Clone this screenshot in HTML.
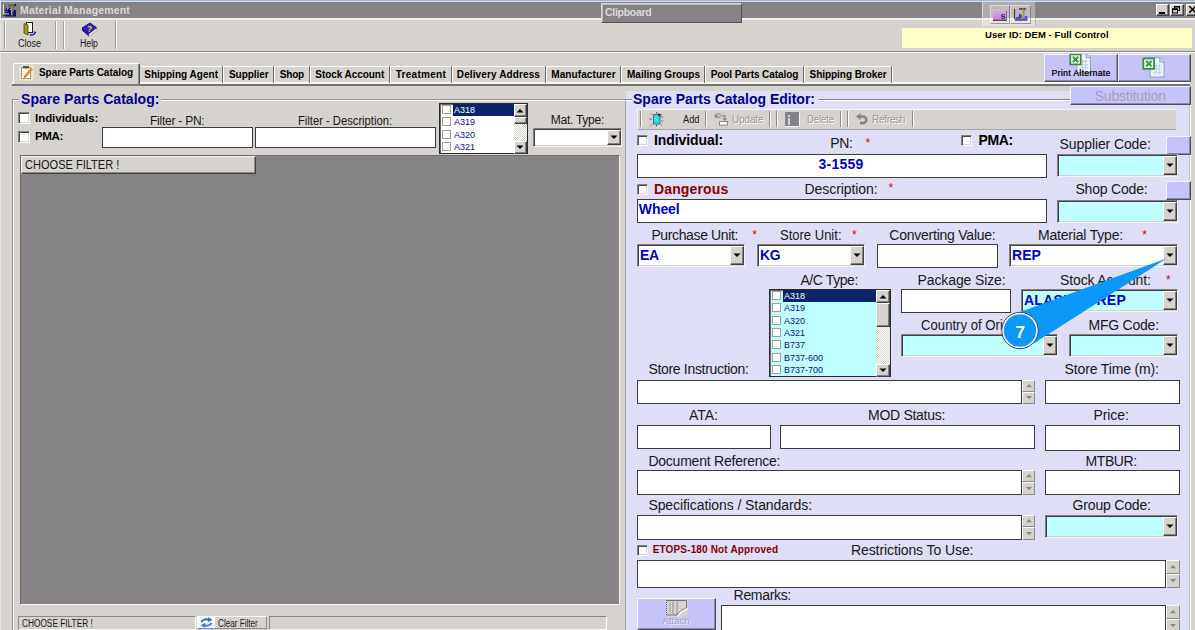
<!DOCTYPE html>
<html><head><meta charset="utf-8"><title>Material Management</title>
<style>
html,body{margin:0;padding:0;}
body{width:1195px;height:630px;overflow:hidden;position:relative;background:#d6d3ce;font-family:"Liberation Sans",sans-serif;}
.a{position:absolute;}
.t{white-space:pre;}
</style></head><body>
<div class="a " style="left:0px;top:0px;width:1195px;height:1px;background:#a6b6d6;"></div>
<div class="a " style="left:0px;top:1px;width:1195px;height:1px;background:#d3ddee;"></div>
<div class="a " style="left:0px;top:2px;width:1195px;height:16px;background:#858385;"></div>
<div class="a " style="left:0px;top:0px;width:1px;height:630px;background:#e4e6ee;"></div>
<div class="a " style="left:0px;top:18px;width:1195px;height:2px;background:#f1efec;"></div>
<svg class="a" style="left:3px;top:3px" width="14" height="14" viewBox="0 0 14 14">
<path d="M2.5 6.5l1.5 -1.5l1.5 1l1.5 -1.8l1.5 1.3v2.5h2l1 -1.6l1.5 1.6v5.5h-11z" fill="#000087"/>
<rect x="0" y="1.5" width="1.3" height="10" fill="#e8e8e8"/><rect x="1.3" y="1.8" width="1.2" height="9.7" fill="#4a4a4a"/>
<rect x="0" y="10.5" width="6" height="1.2" fill="#e8e8e8"/><rect x="0" y="11.5" width="6.5" height="1.1" fill="#2a2a20"/>
<rect x="5" y="1.6" width="7.5" height="1.8" fill="#5a5a5a"/><rect x="11.5" y="1.2" width="1.6" height="1.6" fill="#000"/>
<rect x="8" y="3" width="1.6" height="9.5" fill="#b4a84e"/><rect x="9.6" y="3" width="0.9" height="9.5" fill="#5a5424"/>
<rect x="4" y="5.6" width="1" height="1" fill="#fff"/><rect x="7" y="6" width="0.9" height="1" fill="#fff"/><rect x="3.4" y="8" width="1" height="0.8" fill="#e0e0ff"/></svg>
<div class="a " style="left:601px;top:3px;width:141px;height:20px;background:#858385;box-sizing:border-box;border:1px solid;border-color:#dcd9d3 #55535a #55535a #dcd9d3;box-shadow:inset 1px 1px 0 #bdbab6;"></div>
<div class="a " style="left:982px;top:2px;width:54px;height:24px;background:rgba(255,245,240,0.36);border-left:1px solid rgba(255,255,255,0.55);border-right:1px solid rgba(90,90,90,0.35);box-sizing:border-box;"></div>
<div class="a " style="left:990px;top:5px;width:20px;height:19px;background:rgba(255,250,248,0.22);box-sizing:border-box;border:1px solid;border-color:rgba(255,255,255,0.4) rgba(60,55,55,0.45) rgba(60,55,55,0.45) rgba(255,255,255,0.4);"></div>
<div class="a " style="left:1010px;top:5px;width:21px;height:19px;background:rgba(255,250,248,0.22);box-sizing:border-box;border:1px solid;border-color:rgba(255,255,255,0.4) rgba(60,55,55,0.45) rgba(60,55,55,0.45) rgba(255,255,255,0.4);"></div>
<svg class="a" style="left:992px;top:7px" width="16" height="15" viewBox="0 0 16 15">
<defs><linearGradient id="fg" x1="0" y1="0" x2="0" y2="1"><stop offset="0" stop-color="#cbb0d6"/><stop offset="1" stop-color="#d478e2"/></linearGradient></defs>
<path d="M2 1.5h6v2h-6z" fill="#d9cfd9"/><path d="M2 1.2h6.5" stroke="#7fae7a" stroke-width="0.8"/>
<path d="M1 4l2 -1.2h4l1.2 1.2h6.3v9.5h-13.5z" fill="url(#fg)"/>
<path d="M1 13.3h13.5" stroke="#4a3a4e" stroke-width="1.2"/><path d="M14.5 4v9.5" stroke="#6a5070" stroke-width="0.8"/>
<text x="8.6" y="11.6" font-size="9" font-weight="bold" font-family="Liberation Sans" fill="#2a2a90">s</text></svg>
<svg class="a" style="left:1013px;top:7px" width="16" height="15" viewBox="0 0 16 15">
<rect x="1" y="2" width="1.3" height="10" fill="#3a3840"/><rect x="2.3" y="2" width="1.5" height="10" fill="#b8b4b8"/>
<rect x="6" y="1.3" width="7" height="1.4" fill="#3a3840"/>
<rect x="3" y="10.3" width="5" height="1.4" fill="#3a3840"/>
<path d="M5 11l1.5 -5l1.5 2l1 -1v4z" fill="#4a48b8"/>
<rect x="9" y="2.5" width="2" height="9.5" fill="#c8b840"/><rect x="10.6" y="2.5" width="0.7" height="9.5" fill="#6a6430"/>
<rect x="2" y="11.6" width="12.5" height="2.2" fill="#4a50c8"/><rect x="11.5" y="9" width="3" height="3" fill="#5a58c0"/></svg>
<div class="a " style="left:1156px;top:4px;width:13px;height:12px;background:#d6d3ce;box-sizing:border-box;border:1px solid;border-color:#fff #404040 #404040 #fff;box-shadow:inset -1px -1px 0 #808080;"></div>
<div class="a " style="left:1170px;top:4px;width:14px;height:12px;background:#d6d3ce;box-sizing:border-box;border:1px solid;border-color:#fff #404040 #404040 #fff;box-shadow:inset -1px -1px 0 #808080;"></div>
<div class="a " style="left:1186px;top:4px;width:13px;height:12px;background:#d6d3ce;box-sizing:border-box;border:1px solid;border-color:#fff #404040 #404040 #fff;box-shadow:inset -1px -1px 0 #808080;"></div>
<div class="a" style="left:1159px;top:12px;width:6px;height:2px;background:#000"></div>
<svg class="a" style="left:1172px;top:6px" width="9" height="8" viewBox="0 0 9 8"><rect x="2.5" y="0.5" width="5" height="4" fill="none" stroke="#000"/><rect x="2" y="0" width="6" height="1.6" fill="#000"/><rect x="0.5" y="3" width="5" height="4" fill="#d6d3ce" stroke="#000"/><rect x="0" y="2.5" width="6" height="1.6" fill="#000"/></svg>
<svg class="a" style="left:1189px;top:6px" width="7" height="7" viewBox="0 0 7 7"><path d="M0 0l7 7M7 0l-7 7" stroke="#000" stroke-width="1.5"/></svg>
<div class="a " style="left:4px;top:21px;width:2px;height:28px;background:#a19e98;border-right:1px solid #fff;box-sizing:border-box;"></div>
<div class="a " style="left:55px;top:21px;width:2px;height:28px;background:#a19e98;border-right:1px solid #fff;box-sizing:border-box;"></div>
<div class="a " style="left:63px;top:21px;width:2px;height:28px;background:#a19e98;border-right:1px solid #fff;box-sizing:border-box;"></div>
<div class="a " style="left:115px;top:21px;width:2px;height:28px;background:#a19e98;border-right:1px solid #fff;box-sizing:border-box;"></div>
<svg class="a" style="left:23px;top:21px" width="15" height="16" viewBox="0 0 15 16">
<rect x="3.5" y="1.5" width="6" height="10" fill="#fff" stroke="#202020"/>
<path d="M1 2.5l4 1.5v10l-4 -2z" fill="#a8a000" stroke="#404000" stroke-width="0.8"/>
<path d="M7 13.5c2 1 4 0 5 -1.5" fill="none" stroke="#2030c0" stroke-width="1.4"/><path d="M10.5 10l3 1.2-2 2.3z" fill="#2030c0"/></svg>
<svg class="a" style="left:81px;top:22px" width="17" height="15" viewBox="0 0 17 15">
<path d="M1 6l8 -5l7 5l-8 6z" fill="#3020c0" stroke="#100860" stroke-width="0.8"/>
<path d="M1 6v2.5l7 6v-2.5z" fill="#2010a0"/><path d="M8 12l8 -6v2.5l-8 6z" fill="#f0f0f0" stroke="#808080" stroke-width="0.5"/>
<text x="6.2" y="9.5" font-size="8" font-weight="bold" font-family="Liberation Sans" fill="#ffe000" transform="rotate(8 8 7)">?</text></svg>
<div class="a " style="left:902px;top:28px;width:290px;height:20px;background:#ffffc6;"></div>
<div class="a " style="left:0px;top:51px;width:1195px;height:1px;background:#8e8b86;"></div>
<div class="a " style="left:0px;top:52px;width:1195px;height:1px;background:#fbfaf8;"></div>
<div class="a " style="left:12px;top:82px;width:1178px;height:2px;background:#fbfaf8;"></div>
<div class="a " style="left:12px;top:84px;width:1178px;height:2px;background:#747270;"></div>
<div class="a " style="left:13px;top:63px;width:127px;height:22px;background:#d6d3ce;box-sizing:border-box;border:1px solid;border-color:#fff #55534f #d6d3ce #fff;border-radius:2px 2px 0 0;box-shadow:inset -1px 0 0 #8e8b86;"></div>
<div class="a " style="left:13px;top:84px;width:126px;height:2px;background:#7c7a78;"></div>
<svg class="a" style="left:19px;top:65px" width="16" height="16" viewBox="0 0 16 16">
<rect x="0.5" y="0.5" width="14" height="15" rx="2" fill="#fbe7b8" />
<rect x="2.5" y="2.5" width="9" height="11" fill="#fff" stroke="#9a9a9a"/>
<rect x="4" y="1" width="6" height="2.5" fill="#555"/>
<path d="M5.5 10.5l6.5 -7.5l1.6 1.4l-6.5 7.5l-2.2 0.8z" fill="#f0a020" stroke="#a06000" stroke-width="0.5"/></svg>
<div class="a " style="left:141px;top:66px;width:751px;height:1px;background:#fbfaf8;"></div>
<div class="a " style="left:222px;top:66px;width:1px;height:17px;background:#6e6c68;"></div>
<div class="a " style="left:223px;top:66px;width:1px;height:17px;background:#fff;"></div>
<div class="a " style="left:273px;top:66px;width:1px;height:17px;background:#6e6c68;"></div>
<div class="a " style="left:274px;top:66px;width:1px;height:17px;background:#fff;"></div>
<div class="a " style="left:309px;top:66px;width:1px;height:17px;background:#6e6c68;"></div>
<div class="a " style="left:310px;top:66px;width:1px;height:17px;background:#fff;"></div>
<div class="a " style="left:389px;top:66px;width:1px;height:17px;background:#6e6c68;"></div>
<div class="a " style="left:390px;top:66px;width:1px;height:17px;background:#fff;"></div>
<div class="a " style="left:451px;top:66px;width:1px;height:17px;background:#6e6c68;"></div>
<div class="a " style="left:452px;top:66px;width:1px;height:17px;background:#fff;"></div>
<div class="a " style="left:545px;top:66px;width:1px;height:17px;background:#6e6c68;"></div>
<div class="a " style="left:546px;top:66px;width:1px;height:17px;background:#fff;"></div>
<div class="a " style="left:620px;top:66px;width:1px;height:17px;background:#6e6c68;"></div>
<div class="a " style="left:621px;top:66px;width:1px;height:17px;background:#fff;"></div>
<div class="a " style="left:704px;top:66px;width:1px;height:17px;background:#6e6c68;"></div>
<div class="a " style="left:705px;top:66px;width:1px;height:17px;background:#fff;"></div>
<div class="a " style="left:803px;top:66px;width:1px;height:17px;background:#6e6c68;"></div>
<div class="a " style="left:804px;top:66px;width:1px;height:17px;background:#fff;"></div>
<div class="a " style="left:891px;top:66px;width:1px;height:17px;background:#6e6c68;"></div>
<div class="a " style="left:892px;top:66px;width:1px;height:17px;background:#fff;"></div>
<div class="a " style="left:1044px;top:54px;width:74px;height:28px;background:#c6c3fb;box-sizing:border-box;border:1px solid;border-color:#f6f6ff #4e4e58 #4e4e58 #f6f6ff;box-shadow:inset -1px -1px 0 #8c8aa8;"></div>
<div class="a " style="left:1118px;top:54px;width:73px;height:28px;background:#c6c3fb;box-sizing:border-box;border:1px solid;border-color:#f6f6ff #4e4e58 #4e4e58 #f6f6ff;box-shadow:inset -1px -1px 0 #8c8aa8;"></div>
<div class="a" style="left:1045px;top:54px;width:72px;height:27px;overflow:hidden"><svg class="a" style="left:24px;top:-3.5px" width="23.1" height="23.1" viewBox="0 0 22 22">
<path d="M7.5 2.5h9l4 4v14h-13z" fill="#eef4fb" stroke="#8aa4c8"/><path d="M16.5 2.5v4h4" fill="#d5e3f5" stroke="#8aa4c8"/>
<path d="M10 10h8M10 13h8M10 16h8M13 8v10M16 8v10" stroke="#b5c8e4" stroke-width="0.8"/>
<rect x="1.2" y="3.2" width="10" height="9.6" fill="#eaf5ea" stroke="#3d8a3a" stroke-width="1.6"/>
<path d="M3.8 5.5l5 5M8.8 5.5l-5 5" stroke="#2e9a3e" stroke-width="1.8"/></svg></div>
<svg class="a" style="left:1141.5px;top:55px" width="23.76" height="23.76" viewBox="0 0 22 22">
<path d="M7.5 2.5h9l4 4v14h-13z" fill="#eef4fb" stroke="#8aa4c8"/><path d="M16.5 2.5v4h4" fill="#d5e3f5" stroke="#8aa4c8"/>
<path d="M10 10h8M10 13h8M10 16h8M13 8v10M16 8v10" stroke="#b5c8e4" stroke-width="0.8"/>
<rect x="1.2" y="3.2" width="10" height="9.6" fill="#eaf5ea" stroke="#3d8a3a" stroke-width="1.6"/>
<path d="M3.8 5.5l5 5M8.8 5.5l-5 5" stroke="#2e9a3e" stroke-width="1.8"/></svg>
<div class="a " style="left:12px;top:99px;width:614px;height:541px;box-sizing:border-box;border:1px solid #96938e;border-right-color:#a9a6a2;box-shadow:inset 1px 1px 0 #fff;"></div>
<div class="a " style="left:19px;top:92px;width:142px;height:16px;background:#d6d3ce;"></div>
<div class="a " style="left:18px;top:112px;width:12px;height:12px;background:#fff;box-sizing:border-box;border:1px solid;border-color:#858380 #fbfbfb #fbfbfb #858380;box-shadow:inset 1px 1px 0 #4a4a4a, inset -1px -1px 0 #d9d6d2;"></div>
<div class="a " style="left:18px;top:131px;width:12px;height:12px;background:#fff;box-sizing:border-box;border:1px solid;border-color:#858380 #fbfbfb #fbfbfb #858380;box-shadow:inset 1px 1px 0 #4a4a4a, inset -1px -1px 0 #d9d6d2;"></div>
<div class="a " style="left:102px;top:127px;width:151px;height:21px;background:#fff;border:1px solid #3a3a3a;box-sizing:border-box;"></div>
<div class="a " style="left:255px;top:127px;width:181px;height:21px;background:#fff;border:1px solid #3a3a3a;box-sizing:border-box;"></div>
<div class="a " style="left:533px;top:128px;width:89px;height:19px;background:#fff;box-sizing:border-box;border:1px solid;border-color:#808080 #f4f4f4 #f4f4f4 #808080;box-shadow:inset 1px 1px 0 #404040, inset -1px -1px 0 #d4d0c8;"></div>
<div class="a " style="left:607px;top:130px;width:14px;height:15px;background:#d6d3ce;box-sizing:border-box;border:1px solid;border-color:#fff #404040 #404040 #fff;box-shadow:inset -1px -1px 0 #808080;"></div>
<svg class="a" style="left:610px;top:135px" width="8" height="5" viewBox="0 0 8 5"><path d="M0.5 0.5h7l-3.5 3.5z" fill="#000"/></svg>
<div class="a " style="left:439px;top:103px;width:89px;height:51px;background:#fff;box-sizing:border-box;border:1px solid #2a2a2a;box-shadow:inset 1px 1px 0 #6a6a6a;"></div>
<div class="a " style="left:453px;top:104px;width:61px;height:12px;background:#0a246a;"></div>
<div class="a " style="left:442px;top:105px;width:9px;height:9px;background:#fff;box-sizing:border-box;border:1px solid #a29e9a;"></div>
<div class="a " style="left:442px;top:117px;width:9px;height:9px;background:#fff;box-sizing:border-box;border:1px solid #a29e9a;"></div>
<div class="a " style="left:442px;top:130px;width:9px;height:9px;background:#fff;box-sizing:border-box;border:1px solid #a29e9a;"></div>
<div class="a " style="left:442px;top:142px;width:9px;height:9px;background:#fff;box-sizing:border-box;border:1px solid #a29e9a;"></div>
<div class="a " style="left:514px;top:104px;width:13px;height:49.5px;background:#eceae6;background-image:repeating-conic-gradient(#fff 0 25%,#d6d3ce 0 50%);background-size:2px 2px;"></div>
<div class="a " style="left:514px;top:104px;width:13px;height:12.5px;background:#d6d3ce;box-sizing:border-box;border:1px solid;border-color:#fff #404040 #404040 #fff;box-shadow:inset -1px -1px 0 #808080;"></div>
<svg class="a" style="left:516px;top:108px" width="8" height="5" viewBox="0 0 8 5"><path d="M0.5 4.5h7l-3.5 -3.5z" fill="#000"/></svg>
<div class="a " style="left:514px;top:141.0px;width:13px;height:12.5px;background:#d6d3ce;box-sizing:border-box;border:1px solid;border-color:#fff #404040 #404040 #fff;box-shadow:inset -1px -1px 0 #808080;"></div>
<svg class="a" style="left:516px;top:145px" width="8" height="5" viewBox="0 0 8 5"><path d="M0.5 0.5h7l-3.5 3.5z" fill="#000"/></svg>
<div class="a " style="left:514px;top:117px;width:13px;height:7px;background:#d6d3ce;box-sizing:border-box;border:1px solid;border-color:#fff #404040 #404040 #fff;box-shadow:inset -1px -1px 0 #808080;"></div>
<div class="a " style="left:20px;top:155px;width:600px;height:450px;background:#858385;box-sizing:border-box;border:1px solid;border-color:#6e6c6a #f4f3ef #f4f3ef #6e6c6a;"></div>
<div class="a " style="left:21px;top:156px;width:235px;height:18px;background:#d6d3ce;box-sizing:border-box;border:1px solid;border-color:#f4f3ef #404040 #404040 #f4f3ef;box-shadow:inset -1px -1px 0 #8e8b86;"></div>
<div class="a " style="left:18px;top:616px;width:178px;height:14px;background:#d6d3ce;box-sizing:border-box;border:1px solid;border-color:#8e8b86 #fff #fff #8e8b86;"></div>
<div class="a " style="left:197px;top:616px;width:70px;height:13px;background:#d6d3ce;box-sizing:border-box;border:1px solid;border-color:#fff #8e8b86 #8e8b86 #fff;"></div>
<svg class="a" style="left:198px;top:617px" width="17" height="11" viewBox="0 0 17 11">
<rect x="0" y="0" width="17" height="11" fill="#f6f7fb"/>
<path d="M3.5 5.2c0.6 -2.6 4.5 -3.6 8 -2.2" fill="none" stroke="#3068d0" stroke-width="2"/><path d="M10 0.2l4.6 2.6-4.8 2.4z" fill="#3068d0"/>
<path d="M13.5 5.8c-0.6 2.6 -4.5 3.6 -8 2.2" fill="none" stroke="#3b7be0" stroke-width="2"/><path d="M7 10.8l-4.6 -2.6l4.8 -2.4z" fill="#3b7be0"/></svg>
<div class="a " style="left:269px;top:616px;width:338px;height:14px;background:#d6d3ce;box-sizing:border-box;border:1px solid;border-color:#8e8b86 #fff #fff #8e8b86;"></div>
<div class="a " style="left:626px;top:91px;width:563px;height:549px;background:#dedef6;"></div>
<div class="a " style="left:1189px;top:86px;width:1px;height:554px;background:#bdbdca;"></div>
<div class="a " style="left:1190px;top:86px;width:1px;height:554px;background:#fff;"></div>
<div class="a " style="left:626px;top:99px;width:444px;height:1px;background:#8e8b86;"></div>
<div class="a " style="left:626px;top:100px;width:444px;height:1px;background:#fff;"></div>
<div class="a " style="left:632px;top:91px;width:186px;height:17px;background:#dedef6;"></div>
<div class="a " style="left:1070px;top:86px;width:121px;height:19px;background:#c6c3fb;box-sizing:border-box;border:1px solid;border-color:#f6f6ff #4e4e58 #4e4e58 #f6f6ff;box-shadow:inset -1px -1px 0 #8c8aa8;"></div>
<div class="a " style="left:637px;top:109px;width:539px;height:21px;background:#d6d3ce;box-sizing:border-box;border-top:1px solid #f6f5f2;border-left:1px solid #f6f5f2;border-bottom:1px solid #a9a6a3;"></div>
<div class="a " style="left:640px;top:111px;width:1px;height:16px;background:#8e8b86;"></div>
<div class="a " style="left:641px;top:111px;width:1px;height:16px;background:#fff;"></div>
<div class="a " style="left:705px;top:111px;width:1px;height:16px;background:#8e8b86;"></div>
<div class="a " style="left:706px;top:111px;width:1px;height:16px;background:#fff;"></div>
<div class="a " style="left:769px;top:111px;width:1px;height:16px;background:#8e8b86;"></div>
<div class="a " style="left:770px;top:111px;width:1px;height:16px;background:#fff;"></div>
<div class="a " style="left:776px;top:111px;width:1px;height:16px;background:#8e8b86;"></div>
<div class="a " style="left:777px;top:111px;width:1px;height:16px;background:#fff;"></div>
<div class="a " style="left:840px;top:111px;width:1px;height:16px;background:#8e8b86;"></div>
<div class="a " style="left:841px;top:111px;width:1px;height:16px;background:#fff;"></div>
<div class="a " style="left:847px;top:111px;width:1px;height:16px;background:#8e8b86;"></div>
<div class="a " style="left:848px;top:111px;width:1px;height:16px;background:#fff;"></div>
<div class="a " style="left:912px;top:111px;width:1px;height:16px;background:#8e8b86;"></div>
<div class="a " style="left:913px;top:111px;width:1px;height:16px;background:#fff;"></div>
<svg class="a" style="left:649px;top:112px" width="15" height="15" viewBox="0 0 15 15">
<path d="M4.5 2.5h4l2.5 2.5v7h-6.5z" fill="#18dfee" stroke="#404848" stroke-width="0.7"/>
<path d="M8 1.5l3.5 3.5v-3z" fill="#101010"/>
<path d="M6 6l2.5 2.5M8.5 6.5l-2 2" stroke="#8af4fa" stroke-width="0.8"/>
<path d="M7.5 0.3v1.4M2 1.6l1.4 1.4M12.6 2.2l-1 1M0.6 7h2.2M12.4 5h2M12.4 9h2M2 13.4l1.4 -1.4M12.8 13.2l-1.2 -1.2M7.5 13v1.6" stroke="#202020" stroke-width="1" stroke-dasharray="1 0.7"/></svg>
<svg class="a" style="left:714px;top:113px" width="15" height="13" viewBox="0 0 15 13">
<rect x="0.6" y="0.6" width="2.4" height="4.2" fill="#8e8b86"/><rect x="3.6" y="0.6" width="2.4" height="4.2" fill="none" stroke="#8e8b86" stroke-width="0.9"/>
<path d="M7.5 2.6h3.2v3.6" fill="none" stroke="#8e8b86" stroke-width="1.3"/><path d="M8.4 5.4h4.8l-2.4 2.6z" fill="#8e8b86"/>
<path d="M1.2 1.2h2.2" stroke="#fff" stroke-width="0.6"/>
<rect x="5.5" y="8.5" width="8" height="3.6" fill="#fbfbfb" stroke="#8e8b86" stroke-width="1"/></svg>
<div class="a " style="left:785px;top:112px;width:14px;height:14px;background:#858188;box-shadow:1px 1px 0 #f4f4f4;"></div>
<div class="a" style="left:788px;top:115px;width:2px;height:2px;background:#d6d3ce"></div><div class="a" style="left:788px;top:118px;width:2px;height:7px;background:#d6d3ce"></div>
<svg class="a" style="left:856px;top:113px" width="12" height="12" viewBox="0 0 12 12">
<path d="M3 3.5h4a3.2 3.2 0 0 1 0 6.6h-3" fill="none" stroke="#85828a" stroke-width="2.6"/><path d="M0 3.5l4.6 -3.5v7z" fill="#85828a"/></svg>
<div class="a " style="left:637px;top:135px;width:11px;height:11px;background:#fff;box-sizing:border-box;border:1px solid;border-color:#858380 #fbfbfb #fbfbfb #858380;box-shadow:inset 1px 1px 0 #4a4a4a, inset -1px -1px 0 #d9d6d2;"></div>
<div class="a " style="left:961px;top:135px;width:11px;height:11px;background:#fff;box-sizing:border-box;border:1px solid;border-color:#858380 #fbfbfb #fbfbfb #858380;box-shadow:inset 1px 1px 0 #4a4a4a, inset -1px -1px 0 #d9d6d2;"></div>
<div class="a " style="left:1166px;top:136px;width:25px;height:19px;background:#c6c3fb;box-sizing:border-box;border:1px solid;border-color:#f6f6ff #4e4e58 #4e4e58 #f6f6ff;box-shadow:inset -1px -1px 0 #8c8aa8;"></div>
<div class="a " style="left:637px;top:154px;width:410px;height:24px;background:#fff;border:1px solid #3a3a3a;box-sizing:border-box;"></div>
<div class="a " style="left:1057px;top:154px;width:121px;height:23px;background:#c0ffff;box-sizing:border-box;border:1px solid;border-color:#808080 #f4f4f4 #f4f4f4 #808080;box-shadow:inset 1px 1px 0 #404040, inset -1px -1px 0 #d4d0c8;"></div>
<div class="a " style="left:1163px;top:156px;width:14px;height:19px;background:#d6d3ce;box-sizing:border-box;border:1px solid;border-color:#fff #404040 #404040 #fff;box-shadow:inset -1px -1px 0 #808080;"></div>
<svg class="a" style="left:1166px;top:163px" width="8" height="5" viewBox="0 0 8 5"><path d="M0.5 0.5h7l-3.5 3.5z" fill="#000"/></svg>
<div class="a " style="left:637px;top:184px;width:11px;height:11px;background:#fff;box-sizing:border-box;border:1px solid;border-color:#858380 #fbfbfb #fbfbfb #858380;box-shadow:inset 1px 1px 0 #4a4a4a, inset -1px -1px 0 #d9d6d2;"></div>
<div class="a " style="left:1166px;top:181px;width:25px;height:19px;background:#c6c3fb;box-sizing:border-box;border:1px solid;border-color:#f6f6ff #4e4e58 #4e4e58 #f6f6ff;box-shadow:inset -1px -1px 0 #8c8aa8;"></div>
<div class="a " style="left:637px;top:199px;width:410px;height:24px;background:#fff;border:1px solid #3a3a3a;box-sizing:border-box;"></div>
<div class="a " style="left:1057px;top:200px;width:121px;height:23px;background:#c0ffff;box-sizing:border-box;border:1px solid;border-color:#808080 #f4f4f4 #f4f4f4 #808080;box-shadow:inset 1px 1px 0 #404040, inset -1px -1px 0 #d4d0c8;"></div>
<div class="a " style="left:1163px;top:202px;width:14px;height:19px;background:#d6d3ce;box-sizing:border-box;border:1px solid;border-color:#fff #404040 #404040 #fff;box-shadow:inset -1px -1px 0 #808080;"></div>
<svg class="a" style="left:1166px;top:209px" width="8" height="5" viewBox="0 0 8 5"><path d="M0.5 0.5h7l-3.5 3.5z" fill="#000"/></svg>
<div class="a " style="left:637px;top:244px;width:108px;height:23px;background:#fff;box-sizing:border-box;border:1px solid;border-color:#808080 #f4f4f4 #f4f4f4 #808080;box-shadow:inset 1px 1px 0 #404040, inset -1px -1px 0 #d4d0c8;"></div>
<div class="a " style="left:730px;top:246px;width:14px;height:19px;background:#d6d3ce;box-sizing:border-box;border:1px solid;border-color:#fff #404040 #404040 #fff;box-shadow:inset -1px -1px 0 #808080;"></div>
<svg class="a" style="left:733px;top:253px" width="8" height="5" viewBox="0 0 8 5"><path d="M0.5 0.5h7l-3.5 3.5z" fill="#000"/></svg>
<div class="a " style="left:757px;top:244px;width:108px;height:23px;background:#fff;box-sizing:border-box;border:1px solid;border-color:#808080 #f4f4f4 #f4f4f4 #808080;box-shadow:inset 1px 1px 0 #404040, inset -1px -1px 0 #d4d0c8;"></div>
<div class="a " style="left:850px;top:246px;width:14px;height:19px;background:#d6d3ce;box-sizing:border-box;border:1px solid;border-color:#fff #404040 #404040 #fff;box-shadow:inset -1px -1px 0 #808080;"></div>
<svg class="a" style="left:853px;top:253px" width="8" height="5" viewBox="0 0 8 5"><path d="M0.5 0.5h7l-3.5 3.5z" fill="#000"/></svg>
<div class="a " style="left:877px;top:244px;width:121px;height:24px;background:#fff;border:1px solid #3a3a3a;box-sizing:border-box;"></div>
<div class="a " style="left:1009px;top:244px;width:169px;height:23px;background:#fff;box-sizing:border-box;border:1px solid;border-color:#808080 #f4f4f4 #f4f4f4 #808080;box-shadow:inset 1px 1px 0 #404040, inset -1px -1px 0 #d4d0c8;"></div>
<div class="a " style="left:1163px;top:246px;width:14px;height:19px;background:#d6d3ce;box-sizing:border-box;border:1px solid;border-color:#fff #404040 #404040 #fff;box-shadow:inset -1px -1px 0 #808080;"></div>
<svg class="a" style="left:1166px;top:253px" width="8" height="5" viewBox="0 0 8 5"><path d="M0.5 0.5h7l-3.5 3.5z" fill="#000"/></svg>
<div class="a " style="left:769px;top:289px;width:122px;height:88px;background:#c0ffff;box-sizing:border-box;border:1px solid #2a2a2a;box-shadow:inset 1px 1px 0 #6a6a6a;"></div>
<div class="a " style="left:783px;top:290px;width:93px;height:12px;background:#0a246a;"></div>
<div class="a " style="left:772px;top:291px;width:9px;height:9px;background:#fff;box-sizing:border-box;border:1px solid #a29e9a;"></div>
<div class="a " style="left:772px;top:303px;width:9px;height:9px;background:#fff;box-sizing:border-box;border:1px solid #a29e9a;"></div>
<div class="a " style="left:772px;top:316px;width:9px;height:9px;background:#fff;box-sizing:border-box;border:1px solid #a29e9a;"></div>
<div class="a " style="left:772px;top:328px;width:9px;height:9px;background:#fff;box-sizing:border-box;border:1px solid #a29e9a;"></div>
<div class="a " style="left:772px;top:340px;width:9px;height:9px;background:#fff;box-sizing:border-box;border:1px solid #a29e9a;"></div>
<div class="a " style="left:772px;top:353px;width:9px;height:9px;background:#fff;box-sizing:border-box;border:1px solid #a29e9a;"></div>
<div class="a " style="left:772px;top:365px;width:9px;height:9px;background:#fff;box-sizing:border-box;border:1px solid #a29e9a;"></div>
<div class="a " style="left:876px;top:290px;width:14px;height:86.5px;background:#eceae6;background-image:repeating-conic-gradient(#fff 0 25%,#d6d3ce 0 50%);background-size:2px 2px;"></div>
<div class="a " style="left:876px;top:290px;width:14px;height:12.5px;background:#d6d3ce;box-sizing:border-box;border:1px solid;border-color:#fff #404040 #404040 #fff;box-shadow:inset -1px -1px 0 #808080;"></div>
<svg class="a" style="left:879px;top:294px" width="8" height="5" viewBox="0 0 8 5"><path d="M0.5 4.5h7l-3.5 -3.5z" fill="#000"/></svg>
<div class="a " style="left:876px;top:364.0px;width:14px;height:12.5px;background:#d6d3ce;box-sizing:border-box;border:1px solid;border-color:#fff #404040 #404040 #fff;box-shadow:inset -1px -1px 0 #808080;"></div>
<svg class="a" style="left:879px;top:368px" width="8" height="5" viewBox="0 0 8 5"><path d="M0.5 0.5h7l-3.5 3.5z" fill="#000"/></svg>
<div class="a " style="left:876px;top:303px;width:14px;height:24px;background:#d6d3ce;box-sizing:border-box;border:1px solid;border-color:#fff #404040 #404040 #fff;box-shadow:inset -1px -1px 0 #808080;"></div>
<div class="a " style="left:901px;top:289px;width:110px;height:24px;background:#fff;border:1px solid #3a3a3a;box-sizing:border-box;"></div>
<div class="a " style="left:1021px;top:289px;width:157px;height:23px;background:#c0ffff;box-sizing:border-box;border:1px solid;border-color:#808080 #f4f4f4 #f4f4f4 #808080;box-shadow:inset 1px 1px 0 #404040, inset -1px -1px 0 #d4d0c8;"></div>
<div class="a " style="left:1163px;top:291px;width:14px;height:19px;background:#d6d3ce;box-sizing:border-box;border:1px solid;border-color:#fff #404040 #404040 #fff;box-shadow:inset -1px -1px 0 #808080;"></div>
<svg class="a" style="left:1166px;top:298px" width="8" height="5" viewBox="0 0 8 5"><path d="M0.5 0.5h7l-3.5 3.5z" fill="#000"/></svg>
<div class="a " style="left:901px;top:334px;width:157px;height:23px;background:#c0ffff;box-sizing:border-box;border:1px solid;border-color:#808080 #f4f4f4 #f4f4f4 #808080;box-shadow:inset 1px 1px 0 #404040, inset -1px -1px 0 #d4d0c8;"></div>
<div class="a " style="left:1043px;top:336px;width:14px;height:19px;background:#d6d3ce;box-sizing:border-box;border:1px solid;border-color:#fff #404040 #404040 #fff;box-shadow:inset -1px -1px 0 #808080;"></div>
<svg class="a" style="left:1046px;top:343px" width="8" height="5" viewBox="0 0 8 5"><path d="M0.5 0.5h7l-3.5 3.5z" fill="#000"/></svg>
<div class="a " style="left:1069px;top:334px;width:109px;height:23px;background:#c0ffff;box-sizing:border-box;border:1px solid;border-color:#808080 #f4f4f4 #f4f4f4 #808080;box-shadow:inset 1px 1px 0 #404040, inset -1px -1px 0 #d4d0c8;"></div>
<div class="a " style="left:1163px;top:336px;width:14px;height:19px;background:#d6d3ce;box-sizing:border-box;border:1px solid;border-color:#fff #404040 #404040 #fff;box-shadow:inset -1px -1px 0 #808080;"></div>
<svg class="a" style="left:1166px;top:343px" width="8" height="5" viewBox="0 0 8 5"><path d="M0.5 0.5h7l-3.5 3.5z" fill="#000"/></svg>
<div class="a " style="left:637px;top:380px;width:385px;height:24px;background:#fff;border:1px solid #3a3a3a;box-sizing:border-box;"></div>
<div class="a " style="left:1021px;top:380px;width:1px;height:24px;background:#3a3a3a;"></div>
<div class="a " style="left:1022px;top:380px;width:13px;height:12px;background:#d6d3ce;box-sizing:border-box;border:1px solid;border-color:#fbfaf8 #8e8b86 #8e8b86 #fbfaf8;"></div>
<svg class="a" style="left:1025.5px;top:384.4px" width="6" height="3.2" viewBox="0 0 6 3.2"><path d="M0 3.2h6l-3 -3.2z" fill="#8a8884"/></svg>
<div class="a " style="left:1022px;top:392px;width:13px;height:12px;background:#d6d3ce;box-sizing:border-box;border:1px solid;border-color:#fbfaf8 #8e8b86 #8e8b86 #fbfaf8;"></div>
<svg class="a" style="left:1025.5px;top:396.4px" width="6" height="3.2" viewBox="0 0 6 3.2"><path d="M0 0h6l-3 3.2z" fill="#8a8884"/></svg>
<div class="a " style="left:1045px;top:380px;width:135px;height:24px;background:#fff;border:1px solid #3a3a3a;box-sizing:border-box;"></div>
<div class="a " style="left:637px;top:425px;width:134px;height:24px;background:#fff;border:1px solid #3a3a3a;box-sizing:border-box;"></div>
<div class="a " style="left:780px;top:425px;width:255px;height:24px;background:#fff;border:1px solid #3a3a3a;box-sizing:border-box;"></div>
<div class="a " style="left:1045px;top:425px;width:135px;height:26px;background:#fff;border:1px solid #3a3a3a;box-sizing:border-box;"></div>
<div class="a " style="left:637px;top:470px;width:385px;height:25px;background:#fff;border:1px solid #3a3a3a;box-sizing:border-box;"></div>
<div class="a " style="left:1021px;top:470px;width:1px;height:25px;background:#3a3a3a;"></div>
<div class="a " style="left:1022px;top:470px;width:13px;height:12px;background:#d6d3ce;box-sizing:border-box;border:1px solid;border-color:#fbfaf8 #8e8b86 #8e8b86 #fbfaf8;"></div>
<svg class="a" style="left:1025.5px;top:474.4px" width="6" height="3.2" viewBox="0 0 6 3.2"><path d="M0 3.2h6l-3 -3.2z" fill="#8a8884"/></svg>
<div class="a " style="left:1022px;top:482px;width:13px;height:13px;background:#d6d3ce;box-sizing:border-box;border:1px solid;border-color:#fbfaf8 #8e8b86 #8e8b86 #fbfaf8;"></div>
<svg class="a" style="left:1025.5px;top:486.9px" width="6" height="3.2" viewBox="0 0 6 3.2"><path d="M0 0h6l-3 3.2z" fill="#8a8884"/></svg>
<div class="a " style="left:1045px;top:470px;width:135px;height:25px;background:#fff;border:1px solid #3a3a3a;box-sizing:border-box;"></div>
<div class="a " style="left:637px;top:515px;width:385px;height:25px;background:#fff;border:1px solid #3a3a3a;box-sizing:border-box;"></div>
<div class="a " style="left:1021px;top:515px;width:1px;height:25px;background:#3a3a3a;"></div>
<div class="a " style="left:1022px;top:515px;width:13px;height:12px;background:#d6d3ce;box-sizing:border-box;border:1px solid;border-color:#fbfaf8 #8e8b86 #8e8b86 #fbfaf8;"></div>
<svg class="a" style="left:1025.5px;top:519.4px" width="6" height="3.2" viewBox="0 0 6 3.2"><path d="M0 3.2h6l-3 -3.2z" fill="#8a8884"/></svg>
<div class="a " style="left:1022px;top:527px;width:13px;height:13px;background:#d6d3ce;box-sizing:border-box;border:1px solid;border-color:#fbfaf8 #8e8b86 #8e8b86 #fbfaf8;"></div>
<svg class="a" style="left:1025.5px;top:531.9px" width="6" height="3.2" viewBox="0 0 6 3.2"><path d="M0 0h6l-3 3.2z" fill="#8a8884"/></svg>
<div class="a " style="left:1045px;top:515px;width:133px;height:23px;background:#c0ffff;box-sizing:border-box;border:1px solid;border-color:#808080 #f4f4f4 #f4f4f4 #808080;box-shadow:inset 1px 1px 0 #404040, inset -1px -1px 0 #d4d0c8;"></div>
<div class="a " style="left:1163px;top:517px;width:14px;height:19px;background:#d6d3ce;box-sizing:border-box;border:1px solid;border-color:#fff #404040 #404040 #fff;box-shadow:inset -1px -1px 0 #808080;"></div>
<svg class="a" style="left:1166px;top:524px" width="8" height="5" viewBox="0 0 8 5"><path d="M0.5 0.5h7l-3.5 3.5z" fill="#000"/></svg>
<div class="a " style="left:637px;top:545px;width:11px;height:11px;background:#fff;box-sizing:border-box;border:1px solid;border-color:#858380 #fbfbfb #fbfbfb #858380;box-shadow:inset 1px 1px 0 #4a4a4a, inset -1px -1px 0 #d9d6d2;"></div>
<div class="a " style="left:637px;top:560px;width:529px;height:28px;background:#fff;border:1px solid #3a3a3a;box-sizing:border-box;"></div>
<div class="a " style="left:1165px;top:560px;width:1px;height:28px;background:#3a3a3a;"></div>
<div class="a " style="left:1166px;top:560px;width:14px;height:14px;background:#d6d3ce;box-sizing:border-box;border:1px solid;border-color:#fbfaf8 #8e8b86 #8e8b86 #fbfaf8;"></div>
<svg class="a" style="left:1170.0px;top:565.4px" width="6" height="3.2" viewBox="0 0 6 3.2"><path d="M0 3.2h6l-3 -3.2z" fill="#8a8884"/></svg>
<div class="a " style="left:1166px;top:574px;width:14px;height:14px;background:#d6d3ce;box-sizing:border-box;border:1px solid;border-color:#fbfaf8 #8e8b86 #8e8b86 #fbfaf8;"></div>
<svg class="a" style="left:1170.0px;top:579.4px" width="6" height="3.2" viewBox="0 0 6 3.2"><path d="M0 0h6l-3 3.2z" fill="#8a8884"/></svg>
<div class="a " style="left:637px;top:598px;width:79px;height:32px;background:#c6c3fb;box-sizing:border-box;border:1px solid;border-color:#f6f6ff #4e4e58 #4e4e58 #f6f6ff;box-shadow:inset -1px -1px 0 #8c8aa8;"></div>
<svg class="a" style="left:666px;top:599px" width="22" height="19" viewBox="0 0 22 19">
<rect x="0" y="0.5" width="21.5" height="17.5" fill="#d6d3ce"/>
<path d="M0.5 1v15" stroke="#55534f" stroke-width="1" stroke-dasharray="1 1"/>
<path d="M0.5 1.5h20v6.5c-1 2.5 -2.5 2 -4 2.6c-2.5 1 -3 3.4 -5.5 5.4h-10" fill="none" stroke="#77746f" stroke-width="1"/>
<path d="M21 9.2c-1 2.5 -2.5 2 -4 2.6c-2.5 1 -3 3.4 -5.5 5.4" fill="none" stroke="#fbfbff" stroke-width="1.4"/>
<path d="M4 2.5v12" stroke="#a9a6a1" stroke-width="1.2"/>
<path d="M7 2.5v11c0 3 4.2 3 4.2 0v-11" fill="none" stroke="#9a9792" stroke-width="1.2"/></svg>
<div class="a " style="left:721px;top:605px;width:445px;height:35px;background:#fff;border:1px solid #3a3a3a;box-sizing:border-box;"></div>
<div class="a " style="left:1165px;top:605px;width:1px;height:28px;background:#3a3a3a;"></div>
<div class="a " style="left:1166px;top:605px;width:14px;height:14px;background:#d6d3ce;box-sizing:border-box;border:1px solid;border-color:#fbfaf8 #8e8b86 #8e8b86 #fbfaf8;"></div>
<svg class="a" style="left:1170.0px;top:610.4px" width="6" height="3.2" viewBox="0 0 6 3.2"><path d="M0 3.2h6l-3 -3.2z" fill="#8a8884"/></svg>
<div class="a " style="left:1166px;top:619px;width:14px;height:14px;background:#d6d3ce;box-sizing:border-box;border:1px solid;border-color:#fbfaf8 #8e8b86 #8e8b86 #fbfaf8;"></div>
<svg class="a" style="left:1170.0px;top:624.4px" width="6" height="3.2" viewBox="0 0 6 3.2"><path d="M0 0h6l-3 3.2z" fill="#8a8884"/></svg>
<span class="a t" id="L0" style="left:20px;top:5px;font-size:10.5px;line-height:10.5px;color:#dddbd8;font-weight:bold;letter-spacing:0.169px;">Material Management</span>
<span class="a t" id="L1" style="left:605px;top:7px;font-size:10.5px;line-height:10.5px;color:#dddbd8;font-weight:bold;letter-spacing:-0.289px;">Clipboard</span>
<span class="a t" id="L2" style="left:18px;top:39px;font-size:10px;line-height:10px;color:#181818;transform:scaleX(0.8992);transform-origin:0 0;">Close</span>
<span class="a t" id="L3" style="left:80px;top:39px;font-size:10px;line-height:10px;color:#181818;transform:scaleX(0.8747);transform-origin:0 0;">Help</span>
<span class="a t" id="L4" style="left:985px;top:30px;font-size:9.5px;line-height:9.5px;color:#000;font-weight:bold;letter-spacing:0.062px;">User ID: DEM - Full Control</span>
<span class="a t" id="L5" style="left:39px;top:68px;font-size:10px;line-height:10px;color:#000;font-weight:bold;letter-spacing:-0.055px;">Spare Parts Catalog</span>
<span class="a t" id="L6" style="left:144.2px;top:70px;font-size:10px;line-height:10px;color:#000;font-weight:bold;letter-spacing:0.027px;">Shipping Agent</span>
<span class="a t" id="L7" style="left:229px;top:70px;font-size:10px;line-height:10px;color:#000;font-weight:bold;letter-spacing:-0.064px;">Supplier</span>
<span class="a t" id="L8" style="left:279.8px;top:70px;font-size:10px;line-height:10px;color:#000;font-weight:bold;letter-spacing:-0.200px;">Shop</span>
<span class="a t" id="L9" style="left:315.3px;top:70px;font-size:10px;line-height:10px;color:#000;font-weight:bold;letter-spacing:-0.057px;">Stock Account</span>
<span class="a t" id="L10" style="left:395.8px;top:70px;font-size:10px;line-height:10px;color:#000;font-weight:bold;letter-spacing:0.267px;">Treatment</span>
<span class="a t" id="L11" style="left:456.8px;top:70px;font-size:10px;line-height:10px;color:#000;font-weight:bold;letter-spacing:0.116px;">Delivery Address</span>
<span class="a t" id="L12" style="left:551.3px;top:70px;font-size:10px;line-height:10px;color:#000;font-weight:bold;letter-spacing:0.087px;">Manufacturer</span>
<span class="a t" id="L13" style="left:627px;top:70px;font-size:10px;line-height:10px;color:#000;font-weight:bold;letter-spacing:0.016px;">Mailing Groups</span>
<span class="a t" id="L14" style="left:710.7px;top:70px;font-size:10px;line-height:10px;color:#000;font-weight:bold;letter-spacing:-0.078px;">Pool Parts Catalog</span>
<span class="a t" id="L15" style="left:809.5px;top:70px;font-size:10px;line-height:10px;color:#000;font-weight:bold;letter-spacing:-0.040px;">Shipping Broker</span>
<span class="a t" id="L16" style="left:1051.5px;top:69px;font-size:8.5px;line-height:8.5px;color:#181818;letter-spacing:0.381px;text-shadow:0.3px 0 0 #000;">Print Alternate</span>
<span class="a t" id="L17" style="left:21px;top:92px;font-size:14px;line-height:14px;color:#00008b;font-weight:bold;letter-spacing:0.039px;">Spare Parts Catalog:</span>
<span class="a t" id="L18" style="left:35px;top:113px;font-size:11.5px;line-height:11.5px;color:#000;font-weight:bold;letter-spacing:-0.042px;">Individuals:</span>
<span class="a t" id="L19" style="left:35px;top:131px;font-size:11.5px;line-height:11.5px;color:#000;font-weight:bold;letter-spacing:-0.348px;">PMA:</span>
<span class="a t" id="L20" style="left:150px;top:115px;font-size:12px;line-height:12px;color:#181818;letter-spacing:-0.245px;">Filter - PN:</span>
<span class="a t" id="L21" style="left:298px;top:115px;font-size:12px;line-height:12px;color:#181818;transform:scaleX(0.9336);transform-origin:0 0;">Filter - Description:</span>
<span class="a t" id="L22" style="left:550.8px;top:114px;font-size:12px;line-height:12px;color:#181818;letter-spacing:-0.261px;">Mat. Type:</span>
<span class="a t" id="L23" style="left:454px;top:106px;font-size:9px;line-height:9px;color:#fff;">A318</span>
<span class="a t" id="L24" style="left:454px;top:118px;font-size:9px;line-height:9px;color:#0c0c94;">A319</span>
<span class="a t" id="L25" style="left:454px;top:131px;font-size:9px;line-height:9px;color:#0c0c94;">A320</span>
<span class="a t" id="L26" style="left:454px;top:143px;font-size:9px;line-height:9px;color:#0c0c94;">A321</span>
<span class="a t" id="L27" style="left:24.6px;top:159px;font-size:12px;line-height:12px;color:#181818;transform:scaleX(0.9203);transform-origin:0 0;">CHOOSE FILTER !</span>
<span class="a t" id="L28" style="left:21.6px;top:619px;font-size:10px;line-height:10px;color:#181818;transform:scaleX(0.8291);transform-origin:0 0;">CHOOSE FILTER !</span>
<span class="a t" id="L29" style="left:218px;top:619px;font-size:10px;line-height:10px;color:#181818;transform:scaleX(0.8138);transform-origin:0 0;">Clear Filter</span>
<span class="a t" id="L30" style="left:633px;top:92px;font-size:14px;line-height:14px;color:#00008b;font-weight:bold;letter-spacing:-0.002px;">Spare Parts Catalog Editor:</span>
<span class="a t" id="L31" style="left:1094.7px;top:89px;font-size:14px;line-height:14px;color:#a29eb6;letter-spacing:-0.164px;">Substitution</span>
<span class="a t" id="L32" style="left:682.6px;top:115px;font-size:10px;line-height:10px;color:#181818;transform:scaleX(0.9215);transform-origin:0 0;">Add</span>
<span class="a t" id="L33" style="left:732px;top:115px;font-size:10px;line-height:10px;color:#9a9794;letter-spacing:-0.208px;text-shadow:1px 1px 0 #fff;">Update</span>
<span class="a t" id="L34" style="left:807px;top:115px;font-size:10px;line-height:10px;color:#9a9794;transform:scaleX(0.9341);transform-origin:0 0;text-shadow:1px 1px 0 #fff;">Delete</span>
<span class="a t" id="L35" style="left:872px;top:115px;font-size:10px;line-height:10px;color:#9a9794;letter-spacing:-0.288px;text-shadow:1px 1px 0 #fff;">Refresh</span>
<span class="a t" id="L36" style="left:654px;top:133px;font-size:14px;line-height:14px;color:#000;font-weight:bold;letter-spacing:-0.091px;">Individual:</span>
<span class="a t" id="L37" style="left:830.3px;top:136px;font-size:14px;line-height:14px;color:#181818;letter-spacing:-0.415px;">PN:</span>
<span class="a t" id="L38" style="left:865.5px;top:137px;font-size:12px;line-height:12px;color:#e00000;">*</span>
<span class="a t" id="L39" style="left:978.4px;top:133px;font-size:14px;line-height:14px;color:#000;font-weight:bold;letter-spacing:-0.295px;">PMA:</span>
<span class="a t" id="L40" style="left:1059.6px;top:137px;font-size:14px;line-height:14px;color:#181818;letter-spacing:-0.102px;">Supplier Code:</span>
<span class="a t" id="L41" style="left:818.5px;top:157px;font-size:14px;line-height:14px;color:#0000cc;font-weight:bold;letter-spacing:0.234px;">3-1559</span>
<span class="a t" id="L42" style="left:654px;top:182px;font-size:14px;line-height:14px;color:#8b0000;font-weight:bold;letter-spacing:0.131px;">Dangerous</span>
<span class="a t" id="L43" style="left:804.6px;top:182px;font-size:14px;line-height:14px;color:#181818;letter-spacing:-0.085px;">Description:</span>
<span class="a t" id="L44" style="left:888.5px;top:182px;font-size:12px;line-height:12px;color:#e00000;">*</span>
<span class="a t" id="L45" style="left:1075.4px;top:182px;font-size:14px;line-height:14px;color:#181818;letter-spacing:-0.185px;">Shop Code:</span>
<span class="a t" id="L46" style="left:638.8px;top:202px;font-size:14px;line-height:14px;color:#0000cc;font-weight:bold;letter-spacing:-0.087px;">Wheel</span>
<span class="a t" id="L47" style="left:651.4px;top:228px;font-size:14px;line-height:14px;color:#181818;letter-spacing:-0.373px;">Purchase Unit:</span>
<span class="a t" id="L48" style="left:752.3px;top:229px;font-size:12px;line-height:12px;color:#e00000;">*</span>
<span class="a t" id="L49" style="left:779.5px;top:228px;font-size:14px;line-height:14px;color:#181818;transform:scaleX(0.9298);transform-origin:0 0;">Store Unit:</span>
<span class="a t" id="L50" style="left:852px;top:229px;font-size:12px;line-height:12px;color:#e00000;">*</span>
<span class="a t" id="L51" style="left:889.3px;top:228px;font-size:14px;line-height:14px;color:#181818;letter-spacing:-0.238px;">Converting Value:</span>
<span class="a t" id="L52" style="left:1038px;top:228px;font-size:14px;line-height:14px;color:#181818;letter-spacing:-0.191px;">Material Type:</span>
<span class="a t" id="L53" style="left:1142.3px;top:229px;font-size:12px;line-height:12px;color:#e00000;">*</span>
<span class="a t" id="L54" style="left:640px;top:248px;font-size:14px;line-height:14px;color:#0000cc;font-weight:bold;letter-spacing:-0.227px;">EA</span>
<span class="a t" id="L55" style="left:760px;top:248px;font-size:14px;line-height:14px;color:#0000cc;font-weight:bold;letter-spacing:-0.250px;">KG</span>
<span class="a t" id="L56" style="left:1012px;top:248px;font-size:14px;line-height:14px;color:#0000cc;font-weight:bold;letter-spacing:0.068px;">REP</span>
<span class="a t" id="L57" style="left:800.4px;top:273px;font-size:14px;line-height:14px;color:#181818;letter-spacing:-0.402px;">A/C Type:</span>
<span class="a t" id="L58" style="left:917.6px;top:273px;font-size:14px;line-height:14px;color:#181818;letter-spacing:-0.123px;">Package Size:</span>
<span class="a t" id="L59" style="left:1060px;top:273px;font-size:14px;line-height:14px;color:#181818;letter-spacing:-0.129px;">Stock Account:</span>
<span class="a t" id="L60" style="left:1166px;top:274px;font-size:12px;line-height:12px;color:#e00000;">*</span>
<span class="a t" id="L61" style="left:784px;top:292px;font-size:9px;line-height:9px;color:#fff;">A318</span>
<span class="a t" id="L62" style="left:784px;top:304px;font-size:9px;line-height:9px;color:#0c0c94;">A319</span>
<span class="a t" id="L63" style="left:784px;top:317px;font-size:9px;line-height:9px;color:#0c0c94;">A320</span>
<span class="a t" id="L64" style="left:784px;top:329px;font-size:9px;line-height:9px;color:#0c0c94;">A321</span>
<span class="a t" id="L65" style="left:784px;top:341px;font-size:9px;line-height:9px;color:#0c0c94;">B737</span>
<span class="a t" id="L66" style="left:784px;top:354px;font-size:9px;line-height:9px;color:#0c0c94;">B737-600</span>
<span class="a t" id="L67" style="left:784px;top:366px;font-size:9px;line-height:9px;color:#0c0c94;">B737-700</span>
<span class="a t" id="L68" style="left:1024px;top:293px;font-size:14px;line-height:14px;color:#0000cc;font-weight:bold;letter-spacing:0.246px;">ALASKA - REP</span>
<span class="a t" id="L69" style="left:920.9px;top:318px;font-size:14px;line-height:14px;color:#181818;transform:scaleX(0.9397);transform-origin:0 0;">Country of Origin:</span>
<span class="a t" id="L70" style="left:1088.5px;top:318px;font-size:14px;line-height:14px;color:#181818;letter-spacing:-0.229px;">MFG Code:</span>
<span class="a t" id="L71" style="left:648.4px;top:362px;font-size:14px;line-height:14px;color:#181818;letter-spacing:-0.313px;">Store Instruction:</span>
<span class="a t" id="L72" style="left:1064.6px;top:362px;font-size:14px;line-height:14px;color:#181818;letter-spacing:-0.151px;">Store Time (m):</span>
<span class="a t" id="L73" style="left:689px;top:408px;font-size:14px;line-height:14px;color:#181818;letter-spacing:-0.012px;">ATA:</span>
<span class="a t" id="L74" style="left:868px;top:408px;font-size:14px;line-height:14px;color:#181818;letter-spacing:-0.286px;">MOD Status:</span>
<span class="a t" id="L75" style="left:1093.5px;top:408px;font-size:14px;line-height:14px;color:#181818;letter-spacing:-0.099px;">Price:</span>
<span class="a t" id="L76" style="left:648.4px;top:454px;font-size:14px;line-height:14px;color:#181818;letter-spacing:-0.226px;">Document Reference:</span>
<span class="a t" id="L77" style="left:1085.5px;top:454px;font-size:14px;line-height:14px;color:#181818;letter-spacing:-0.412px;">MTBUR:</span>
<span class="a t" id="L78" style="left:648.4px;top:498px;font-size:14px;line-height:14px;color:#181818;letter-spacing:-0.080px;">Specifications / Standards:</span>
<span class="a t" id="L79" style="left:1072.6px;top:498px;font-size:14px;line-height:14px;color:#181818;letter-spacing:-0.179px;">Group Code:</span>
<span class="a t" id="L80" style="left:652.7px;top:545px;font-size:10px;line-height:10px;color:#8b0000;font-weight:bold;letter-spacing:0.152px;">ETOPS-180 Not Approved</span>
<span class="a t" id="L81" style="left:851px;top:543px;font-size:14px;line-height:14px;color:#181818;letter-spacing:-0.092px;">Restrictions To Use:</span>
<span class="a t" id="L82" style="left:733.6px;top:588px;font-size:14px;line-height:14px;color:#181818;letter-spacing:-0.326px;">Remarks:</span>
<span class="a t" id="L83" style="left:662.2px;top:616px;font-size:9.5px;line-height:9.5px;color:#a3a1ad;letter-spacing:0.110px;text-shadow:1px 1px 0 #f0f0ff;">Attach</span>
<svg class="a" style="left:990px;top:240px" width="200" height="120" viewBox="990 240 200 120">
<path d="M1167 258.3 L1013 314.5 L1033 344 Z" fill="#0c98f8"/>
<circle cx="1020" cy="330.5" r="18.2" fill="#fff" stroke="#3a4652" stroke-width="1"/>
<circle cx="1020" cy="330.5" r="16.2" fill="#0c98f8"/>
<text x="1020.3" y="338" text-anchor="middle" font-family="Liberation Sans" font-weight="bold" font-size="17" fill="#fff">7</text></svg>
</body></html>
